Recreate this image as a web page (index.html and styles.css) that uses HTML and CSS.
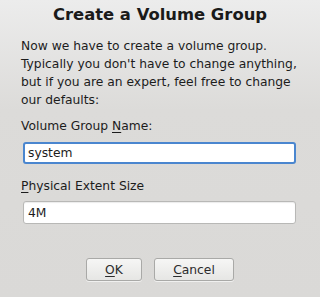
FILE: index.html
```html
<!DOCTYPE html>
<html lang="en">
<head>
  <meta charset="UTF-8" />
  <title>Create a Volume Group</title>
  <link rel="stylesheet" href="styles.css">
</head>
<body>
  <div class="dialog">
    <h1 class="dialog-title">Create a Volume Group</h1>
    <p class="intro">Now we have to create a volume group. Typically you don't have to change anything, but if you are an expert, feel free to change our defaults:</p>

    <label class="field-label" for="vg-name">Volume Group <u>N</u>ame:</label>
    <input id="vg-name" class="entry entry-focus" type="text" value="system" />

    <label class="field-label field-label-2" for="pe-size"><u>P</u>hysical Extent Size</label>
    <input id="pe-size" class="entry entry-2" type="text" value="4M" />

    <div class="button-row">
      <button class="btn btn-ok"><u>O</u>K</button>
      <button class="btn btn-cancel"><u>C</u>ancel</button>
    </div>
  </div>
</body>
</html>
```

FILE: styles.css
```css
html, body {
  margin: 0;
  padding: 0;
}
body {
  width: 320px;
  height: 297px;
  overflow: hidden;
  font-family: 'DejaVu Sans', sans-serif;
  font-size: 12.3px;
  color: #1c1c1c;
  background: linear-gradient(to bottom, #ececec 0px, #dcdbd9 110px, #dad9d7 100%);
}
.dialog {
  padding: 3px 18px 0 21px;
  display: flex;
  flex-direction: column;
}
.dialog-title {
  margin: 0 3px 0 0;
  text-align: center;
  font-size: 16.4px;
  font-weight: bold;
  line-height: 24px;
  color: #1a1a1a;
}
.intro {
  margin: 10px 0 0 0;
  line-height: 18px;
}
.field-label {
  margin-top: 8px;
  line-height: 18px;
}
.field-label-2 {
  margin-top: 13px;
}
.field-label u,
.btn u {
  text-decoration-thickness: 1px;
  text-underline-offset: 2px;
}
.entry {
  box-sizing: border-box;
  margin: 7px 6px 0 2px;
  height: 22px;
  padding: 0 4px;
  font-family: 'DejaVu Sans', sans-serif;
  font-size: 12.3px;
  color: #1c1c1c;
  background: #fff;
  border: 1px solid #b8b8b6;
  border-radius: 3px;
  box-shadow: inset 0 1px 1px rgba(0, 0, 0, 0.08);
  outline: none;
}
.entry-2 {
  margin-top: 6px;
  height: 23px;
}
.entry-focus {
  border: 2px solid #4a86cf;
  padding: 0 3px;
  box-shadow: none;
}
.button-row {
  display: flex;
  justify-content: center;
  gap: 12px;
  margin-top: 34px;
  margin-right: 3px;
}
.btn {
  box-sizing: border-box;
  height: 23px;
  font-family: 'DejaVu Sans', sans-serif;
  font-size: 12.3px;
  color: #2c2c2c;
  background: linear-gradient(to bottom, #f6f6f5, #e6e6e4);
  border: 1px solid #a9a9a7;
  border-radius: 3px;
  box-shadow: 0 1px 0 rgba(255, 255, 255, 0.6);
  padding: 0;
}
.btn-ok {
  width: 56px;
}
.btn-cancel {
  width: 80px;
}
```
